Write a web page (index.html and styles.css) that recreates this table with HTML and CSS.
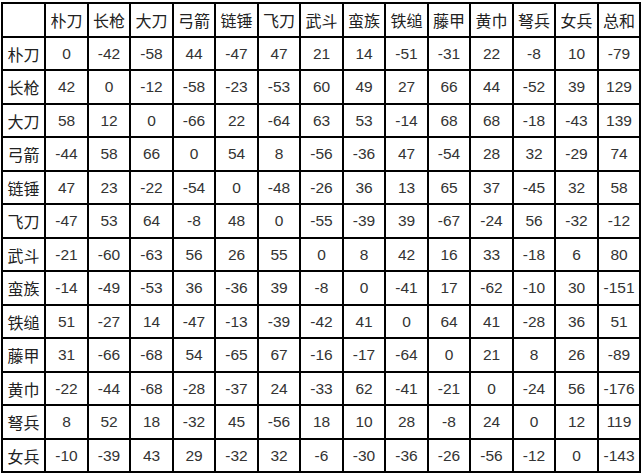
FILE: index.html
```html
<!DOCTYPE html>
<html lang="zh-CN">
<head>
<meta charset="utf-8">
<title>兵种相克表</title>
<link rel="stylesheet" href="styles.css">
</head>
<body>
<table class="grid">
<colgroup>
<col class="w43"><col class="w43"><col class="w42"><col class="w43"><col class="w42"><col class="w43"><col class="w42"><col class="w43"><col class="w42"><col class="w43"><col class="w42"><col class="w43"><col class="w42"><col class="w43"><col class="w42">
</colgroup>
<tr class="r34"><th></th><th>朴刀</th><th>长枪</th><th>大刀</th><th>弓箭</th><th>链锤</th><th>飞刀</th><th>武斗</th><th>蛮族</th><th>铁缒</th><th>藤甲</th><th>黄巾</th><th>弩兵</th><th>女兵</th><th>总和</th></tr>
<tr class="r33"><th>朴刀</th><td>0</td><td>-42</td><td>-58</td><td>44</td><td>-47</td><td>47</td><td>21</td><td>14</td><td>-51</td><td>-31</td><td>22</td><td>-8</td><td>10</td><td>-79</td></tr>
<tr class="r34"><th>长枪</th><td>42</td><td>0</td><td>-12</td><td>-58</td><td>-23</td><td>-53</td><td>60</td><td>49</td><td>27</td><td>66</td><td>44</td><td>-52</td><td>39</td><td>129</td></tr>
<tr class="r33"><th>大刀</th><td>58</td><td>12</td><td>0</td><td>-66</td><td>22</td><td>-64</td><td>63</td><td>53</td><td>-14</td><td>68</td><td>68</td><td>-18</td><td>-43</td><td>139</td></tr>
<tr class="r34"><th>弓箭</th><td>-44</td><td>58</td><td>66</td><td>0</td><td>54</td><td>8</td><td>-56</td><td>-36</td><td>47</td><td>-54</td><td>28</td><td>32</td><td>-29</td><td>74</td></tr>
<tr class="r33"><th>链锤</th><td>47</td><td>23</td><td>-22</td><td>-54</td><td>0</td><td>-48</td><td>-26</td><td>36</td><td>13</td><td>65</td><td>37</td><td>-45</td><td>32</td><td>58</td></tr>
<tr class="r34"><th>飞刀</th><td>-47</td><td>53</td><td>64</td><td>-8</td><td>48</td><td>0</td><td>-55</td><td>-39</td><td>39</td><td>-67</td><td>-24</td><td>56</td><td>-32</td><td>-12</td></tr>
<tr class="r33"><th>武斗</th><td>-21</td><td>-60</td><td>-63</td><td>56</td><td>26</td><td>55</td><td>0</td><td>8</td><td>42</td><td>16</td><td>33</td><td>-18</td><td>6</td><td>80</td></tr>
<tr class="r34"><th>蛮族</th><td>-14</td><td>-49</td><td>-53</td><td>36</td><td>-36</td><td>39</td><td>-8</td><td>0</td><td>-41</td><td>17</td><td>-62</td><td>-10</td><td>30</td><td>-151</td></tr>
<tr class="r33"><th>铁缒</th><td>51</td><td>-27</td><td>14</td><td>-47</td><td>-13</td><td>-39</td><td>-42</td><td>41</td><td>0</td><td>64</td><td>41</td><td>-28</td><td>36</td><td>51</td></tr>
<tr class="r34"><th>藤甲</th><td>31</td><td>-66</td><td>-68</td><td>54</td><td>-65</td><td>67</td><td>-16</td><td>-17</td><td>-64</td><td>0</td><td>21</td><td>8</td><td>26</td><td>-89</td></tr>
<tr class="r33"><th>黄巾</th><td>-22</td><td>-44</td><td>-68</td><td>-28</td><td>-37</td><td>24</td><td>-33</td><td>62</td><td>-41</td><td>-21</td><td>0</td><td>-24</td><td>56</td><td>-176</td></tr>
<tr class="r34"><th>弩兵</th><td>8</td><td>52</td><td>18</td><td>-32</td><td>45</td><td>-56</td><td>18</td><td>10</td><td>28</td><td>-8</td><td>24</td><td>0</td><td>12</td><td>119</td></tr>
<tr class="r33"><th>女兵</th><td>-10</td><td>-39</td><td>43</td><td>29</td><td>-32</td><td>32</td><td>-6</td><td>-30</td><td>-36</td><td>-26</td><td>-56</td><td>-12</td><td>0</td><td>-143</td></tr>
</table>
</body>
</html>
```
FILE: styles.css
```css
html, body {
  margin: 0;
  padding: 0;
  background: #fff;
}
body {
  padding: 2px 0 0 1px;
  font-family: "Noto Sans CJK SC", "Noto Sans", sans-serif;
  font-size: 16px;
  color: #222;
}
.grid {
  border-collapse: separate;
  border-spacing: 0;
  table-layout: fixed;
  width: 640px;
  border-left: 2px solid #000;
  border-top: 2px solid #000;
}
.w43 { width: 43px; }
.w42 { width: 42px; }
.r33 { height: 33px; }
.r34 { height: 34px; }
.grid th,
.grid td {
  box-sizing: border-box;
  border-right: 2px solid #000;
  border-bottom: 2px solid #000;
  padding: 0;
  text-align: center;
  vertical-align: middle;
  font-weight: 400;
  line-height: 1;
  white-space: nowrap;
}
.grid th {
  color: #222;
}
.grid td {
  font-family: "Liberation Sans", "Noto Sans CJK SC", sans-serif;
  font-size: 15.5px;
  color: #333;
}
```
